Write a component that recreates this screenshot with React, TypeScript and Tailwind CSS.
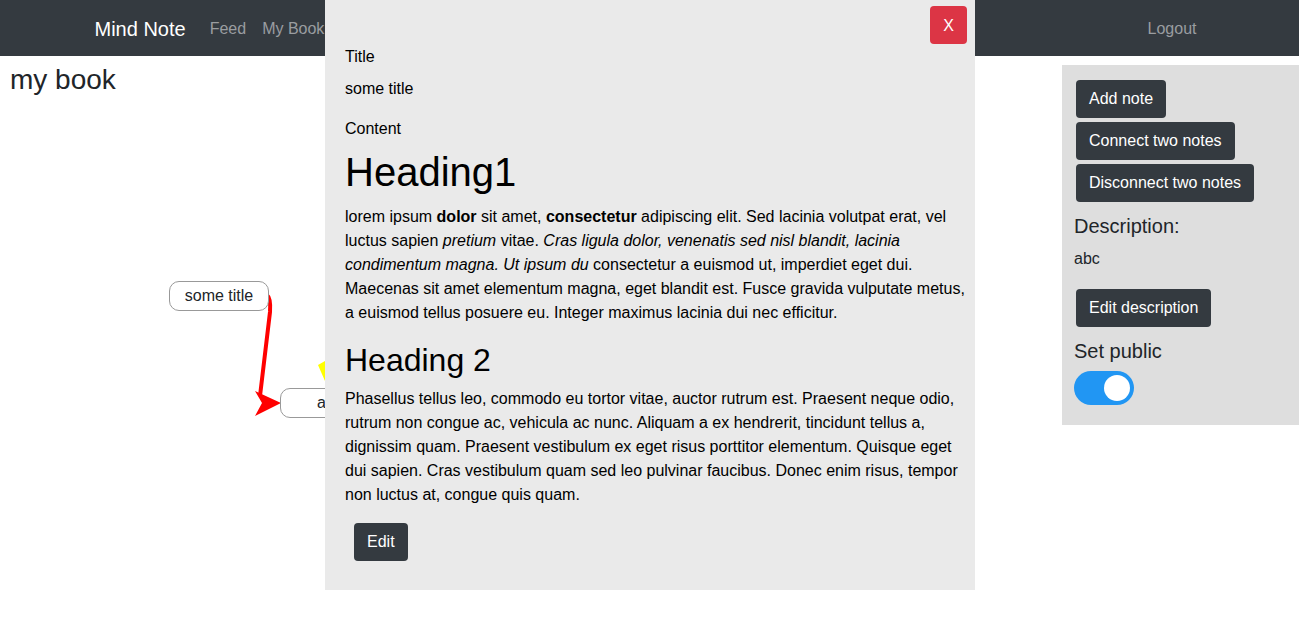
const font = { fontFamily: '"Liberation Sans", Arial, sans-serif' };

function Btn({ children, className = '' }: { children: React.ReactNode; className?: string }) {
    return (
        <button className={`h-[38px] px-[13px] rounded-[4px] bg-[#343a40] text-white text-[16px] leading-6 ${className}`}>
            {children}
        </button>
    );
}

function Canvas() {
    return (
        <div className="relative flex-1 h-[560px]">
            <h3 className="ml-[10px] mt-[7px] text-[28px] leading-[34px] text-[#212529]">my book</h3>
            <svg className="absolute left-0 top-0" width="400" height="500" viewBox="0 56 400 500">
                <path d="M267 295 Q271 298 270 312 L260 396" stroke="#ff0000" strokeWidth="4" fill="none" />
                <polygon points="281,403 255,391 262,403 255,416" fill="#ff0000" />
                <polygon points="318,365 325,361 325,381" fill="#ffff00" />
            </svg>
            <div className="absolute left-[169px] top-[225px] w-[100px] h-[30px] rounded-[10px] border border-[#999] bg-white flex items-center justify-center text-[16px] leading-5 text-[#212529]">
                some title
            </div>
            <div className="absolute left-[280px] top-[332px] w-[100px] h-[30px] rounded-[10px] border border-[#999] bg-white flex items-center justify-center text-[16px] leading-5 text-[#212529]">
                abc
            </div>
        </div>
    );
}

function SidePanel() {
    return (
        <div className="w-[237px] mt-[9px] bg-[#dedede] pl-[12px] pt-[15px] pb-[20px] self-start">
            <div className="flex flex-col items-start gap-1 pl-[2px]">
                <Btn>Add note</Btn>
                <Btn>Connect two notes</Btn>
                <Btn>Disconnect two notes</Btn>
            </div>
            <div className="mt-[12px] text-[20px] leading-6 text-[#212529]">Description:</div>
            <div className="mt-[9px] text-[16px] leading-6 text-[#212529]">abc</div>
            <div className="mt-[18px] pl-[2px]">
                <Btn>Edit description</Btn>
            </div>
            <div className="mt-[12px] text-[20px] leading-6 text-[#212529]">Set public</div>
            <div className="mt-[8px] w-[60px] h-[34px] rounded-full bg-[#2196f3] flex items-center justify-end pr-[4px]">
                <div className="w-[26px] h-[26px] rounded-full bg-white" />
            </div>
        </div>
    );
}

function Modal() {
    return (
        <div className="absolute left-[325px] top-0 w-[650px] h-[590px] bg-[#eaeaea] text-black">
            <div className="flex justify-end pt-[6px] pr-[8px]">
                <button className="w-[37px] h-[38px] pt-[1px] rounded-[4px] bg-[#dc3545] text-white text-[16px]">X</button>
            </div>
            <div className="pl-[20px] pr-[8px]">
                <div className="mt-[1px] text-[16px] leading-6">Title</div>
                <div className="mt-[8px] text-[16px] leading-6">some title</div>
                <div className="mt-[16px] text-[16px] leading-6">Content</div>
                <h1 className="mt-[7px] text-[40px] leading-[48px]">Heading1</h1>
                <p className="mt-[9px] text-[16px] leading-6">
                    lorem ipsum <b>dolor</b> sit amet, <b>consectetur</b> adipiscing elit. Sed lacinia volutpat erat, vel
                    luctus sapien <i>pretium</i> vitae. <i>Cras ligula dolor, venenatis sed nisl blandit, lacinia
                    condimentum magna. Ut ipsum du</i> consectetur a euismod ut, imperdiet eget dui. Maecenas sit amet
                    elementum magna, eget blandit est. Fusce gravida vulputate metus, a euismod tellus posuere eu. Integer
                    maximus lacinia dui nec efficitur.
                </p>
                <h2 className="mt-[16px] text-[32px] leading-[38px]">Heading 2</h2>
                <p className="mt-[8px] text-[16px] leading-6">
                    Phasellus tellus leo, commodo eu tortor vitae, auctor rutrum est. Praesent neque odio, rutrum non
                    congue ac, vehicula ac nunc. Aliquam a ex hendrerit, tincidunt tellus a, dignissim quam. Praesent
                    vestibulum ex eget risus porttitor elementum. Quisque eget dui sapien. Cras vestibulum quam sed leo
                    pulvinar faucibus. Donec enim risus, tempor non luctus at, congue quis quam.
                </p>
                <Btn className="mt-[16px] ml-[9px]">Edit</Btn>
            </div>
        </div>
    );
}

export default function App() {
    return (
        <div className="relative w-full min-h-[633px] bg-white" style={font}>
            <nav className="h-[56px] bg-[#343a40] flex items-center">
                <div className="w-[1140px] mx-auto mt-[2px] px-[15px] flex items-center">
                    <span className="text-[20px] text-white mr-[16px]">Mind Note</span>
                    <a className="px-[8px] text-[16px] text-[#9a9da0]">Feed</a>
                    <a className="px-[8px] text-[16px] text-[#9a9da0]">My Book</a>
                    <a className="ml-auto px-[8px] text-[16px] text-[#9a9da0]">Logout</a>
                </div>
            </nav>
            <div className="flex">
                <Canvas />
                <SidePanel />
            </div>
            <Modal />
        </div>
    );
}
